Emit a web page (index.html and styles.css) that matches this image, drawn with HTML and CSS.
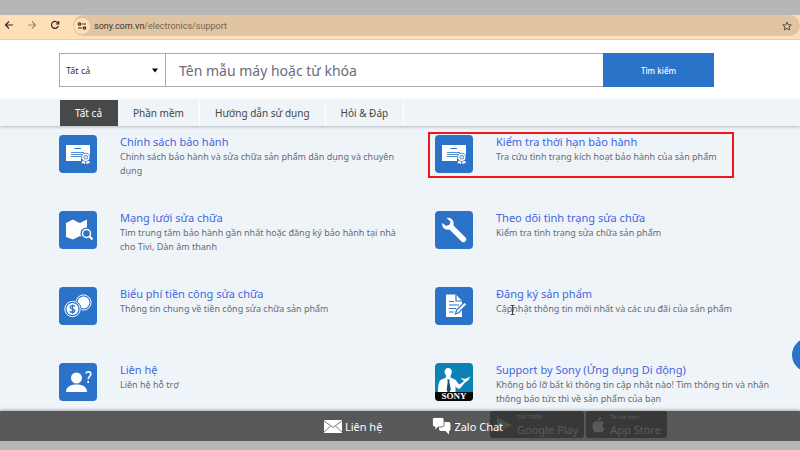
FILE: index.html
```html
<!DOCTYPE html>
<html lang="vi">
<head>
<meta charset="utf-8">
<meta name="viewport" content="width=device-width, initial-scale=1">
<title>Hỗ trợ</title>
<link rel="stylesheet" href="styles.css">
</head>
<body>
<div class="shell">
  <header class="browser">
    <button class="nav" aria-label="Back"><svg width="10" height="10" viewBox="0 0 10 10"><path d="M9 5H2M5 1.500L1.500 5L5 8.500"/></svg></button>
    <button class="nav off" aria-label="Forward"><svg width="10" height="10" viewBox="0 0 10 10"><path d="M1 5H8M5 1.500L8.500 5L5 8.500"/></svg></button>
    <button class="nav" aria-label="Reload"><svg width="10" height="10" viewBox="0 0 10 10"><path d="M8.300 6A3.500 3.500 0 1 1 7.700 2.600L8.500 3.500M8.700 1V4H5.700"/></svg></button>
    <div class="address">
      <button class="site" aria-label="Site information"><svg width="10" height="10" viewBox="0 0 10 10"><path d="M5 3H9M1 7H5"/><circle cx="2.500" cy="3" r="1.200"/><circle cx="7.500" cy="7" r="1.200"/></svg></button>
      <span class="url">sony.com.vn<span>/electronics/support</span></span>
      <button class="star" aria-label="Bookmark"><svg width="10" height="10" viewBox="0 0 10 10"><path d="M5 .9L6.200 3.700L9.300 4L7 6L7.700 9L5 7.400L2.300 9L3 6L.7 4L3.800 3.700Z"/></svg></button>
    </div>
  </header>

  <main class="page">
    <form class="search">
      <div class="pick">
        <select aria-label="Danh mục"><option>Tất cả</option></select>
        <svg width="8" height="5" viewBox="0 0 8 5" aria-hidden="true"><path d="M1 .5H7L4 4.500Z"/></svg>
      </div>
      <input type="text" aria-label="Tìm sản phẩm" placeholder="Tên mẫu máy hoặc từ khóa">
      <button type="button">Tìm kiếm</button>
    </form>

    <nav class="tabs">
      <a class="active" href="#all">Tất cả</a>
      <a href="#software">Phần mềm</a>
      <a href="#manuals">Hướng dẫn sử dụng</a>
      <a href="#faq">Hỏi &amp; Đáp</a>
    </nav>

    <section class="topics">
      <article class="topic">
        <svg class="icon" viewBox="0 0 38 38"><rect width="38" height="38" rx="4" fill="#2b73c8"/><path d="M7 10H31V26H7Z" fill="#fff"/><path d="M15.500 13.500H22" stroke="#2b73c8"/><path d="M12 17.500H25M12 19.500H23M12 21.500H22" stroke="#2b73c8" stroke-width=".8"/><path d="M22 24H31V29H22Z" fill="#2b73c8"/><path d="M24 24L22.500 28.500L24.500 28L25.500 29.500L26.800 26.500L28 29.500L29 28L31 28.500L29.500 24Z" fill="#fff"/><circle cx="26.700" cy="22.300" r="4.500" fill="#2b73c8"/><circle cx="26.700" cy="22.300" r="3" fill="#2b73c8" stroke="#fff" stroke-width="1.500"/><circle cx="26.700" cy="22.300" r="1.700" fill="#c9dcf2"/></svg>
        <div><h2><a href="#policy">Chính sách bảo hành</a></h2><p>Chính sách bảo hành và sửa chữa sản phẩm dân dụng và chuyên dụng</p></div>
      </article>
      <article class="topic marked">
        <svg class="icon" viewBox="0 0 38 38"><rect width="38" height="38" rx="4" fill="#2b73c8"/><path d="M7 10H31V26H7Z" fill="#fff"/><path d="M15.500 13.500H22" stroke="#2b73c8"/><path d="M12 17.500H25M12 19.500H23M12 21.500H22" stroke="#2b73c8" stroke-width=".8"/><path d="M22 24H31V29H22Z" fill="#2b73c8"/><path d="M24 24L22.500 28.500L24.500 28L25.500 29.500L26.800 26.500L28 29.500L29 28L31 28.500L29.500 24Z" fill="#fff"/><circle cx="26.700" cy="22.300" r="4.500" fill="#2b73c8"/><circle cx="26.700" cy="22.300" r="3" fill="#2b73c8" stroke="#fff" stroke-width="1.500"/><circle cx="26.700" cy="22.300" r="1.700" fill="#c9dcf2"/></svg>
        <div><h2><a href="#warranty">Kiểm tra thời hạn bảo hành</a></h2><p>Tra cứu tình trạng kích hoạt bảo hành của sản phẩm</p></div>
      </article>
      <article class="topic">
        <svg class="icon" viewBox="0 0 38 38"><rect width="38" height="38" rx="4" fill="#2b73c8"/><path d="M7 12L14 8.500Q18 11 21 12Q24 10 28 8.500V28L21 25L14 28.500L7 26Z" fill="#fff"/><circle cx="27.500" cy="22.500" r="6" fill="#2b73c8"/><path d="M30 25L33.500 28.500" stroke="#fff" stroke-width="2.200"/><circle cx="27.500" cy="22.500" r="4" fill="#2b73c8" stroke="#fff" stroke-width="1.500"/></svg>
        <div><h2><a href="#network">Mạng lưới sửa chữa</a></h2><p>Tìm trung tâm bảo hành gần nhất hoặc đăng ký bảo hành tại nhà cho Tivi, Dàn âm thanh</p></div>
      </article>
      <article class="topic">
        <svg class="icon" viewBox="0 0 38 38"><rect width="38" height="38" rx="4" fill="#2b73c8"/><path d="M11.500 7C16 6 19.500 9.500 18.500 14.500L30.500 26.500C33 29 29 33 26.500 30.500L14.500 18.500C10 19.500 6.500 16 7.300 12L11.200 15L14.800 13.500L15.500 10.500Z" fill="#fff"/></svg>
        <div><h2><a href="#status">Theo dõi tình trạng sửa chữa</a></h2><p>Kiểm tra tình trạng sửa chữa sản phẩm</p></div>
      </article>
      <article class="topic">
        <svg class="icon" viewBox="0 0 38 38"><rect width="38" height="38" rx="4" fill="#2b73c8"/><circle cx="24.500" cy="15.500" r="7.600" fill="none" stroke="#fff"/><circle cx="24.500" cy="15.500" r="6" fill="#fff"/><circle cx="13.500" cy="22" r="9" fill="#2b73c8"/><circle cx="13.500" cy="22" r="7.700" fill="none" stroke="#fff"/><circle cx="13.500" cy="22" r="6" fill="#fff"/><path d="M16 19.600Q15 18.700 13.500 18.700C10.500 18.700 10.500 21.400 13.500 22S16.700 25.300 13.500 25.300Q11.800 25.300 10.900 24.300M13.500 17.500V26.500" fill="none" stroke="#2b73c8" stroke-width="1.300"/></svg>
        <div><h2><a href="#fees">Biểu phí tiền công sửa chữa</a></h2><p>Thông tin chung về tiền công sửa chữa sản phẩm</p></div>
      </article>
      <article class="topic">
        <svg class="icon" viewBox="0 0 38 38"><rect width="38" height="38" rx="4" fill="#2b73c8"/><path d="M11 7.500H21L27 14V30H11Z" fill="#fff"/><path d="M21 7.500V14H27M14 14.500H19M14 18H24M14 21.500H21M14 25H19" fill="none" stroke="#2b73c8" stroke-width="1.200"/><path d="M20.500 27L21.500 23L29.500 15L32 17.500L24 25.500Z" fill="#fff" stroke="#2b73c8" stroke-width="1.200"/></svg>
        <div><h2><a href="#register">Đăng ký sản phẩm</a></h2><p>Cập<svg class="caret" width="5" height="10" viewBox="0 0 5 10" aria-hidden="true"><path d="M.5 .5H4.500M2.500 .5V9.500M.5 9.500H4.500"/></svg>nhật thông tin mới nhất và các ưu đãi của sản phẩm</p></div>
      </article>
      <article class="topic">
        <svg class="icon" viewBox="0 0 38 38"><rect width="38" height="38" rx="4" fill="#2b73c8"/><circle cx="17.500" cy="15" r="5.500" fill="#fff"/><path d="M7 29C7 24 11 21.500 17.500 21.500S28 24 28 29Z" fill="#fff"/><path d="M26.800 10.500C27.500 8 32 8.300 31.800 11.300C31.600 13.300 29.200 13.500 29.200 16.300M29.200 18V20" fill="none" stroke="#fff" stroke-width="1.600"/></svg>
        <div><h2><a href="#contact">Liên hệ</a></h2><p>Liên hệ hỗ trợ</p></div>
      </article>
      <article class="topic">
        <svg class="icon" viewBox="0 0 38 38"><rect width="38" height="38" rx="4" fill="#0b84b5"/><path d="M3 29C3 21 4 17.500 6.500 16.500L11 14.500V12.500C8.500 9 9.500 5 13.200 5S18 9 15.500 12.500V14.500L20 16.500C22 18 22.500 20.500 24.500 21.500L29 18L25.500 15L30 16L35.500 13.500L33 17.500L30 19.500L25 25.500C23 26.500 21.500 24.500 20.500 23V29Z" fill="#fff"/><path d="M12.300 16.500H14.700L14.300 19L15.800 26.500L14.500 29H12.500L11.700 26.500L12.700 19Z" fill="#164f78"/><path d="M0 29H38V34Q38 38 34 38H4Q0 38 0 34Z" fill="#080808"/><text x="19" y="36" text-anchor="middle" font-family="Liberation Serif, serif" font-size="9" font-weight="700" fill="#fff">SONY</text></svg>
        <div>
          <h2><a href="#app">Support by Sony (Ứng dụng Di động)</a></h2>
          <p>Không bỏ lỡ bất kì thông tin cập nhật nào! Tìm thông tin và nhận thông báo tức thì về sản phẩm của bạn</p>
          <div class="stores">
            <a href="#play"><svg width="16" height="18" viewBox="0 0 16 18"><path d="M1 1V17L8 9Z" fill="#47aee8"/><path d="M1 1L12 7L8 9Z" fill="#4bbf6b"/><path d="M1 17L12 11L8 9Z" fill="#ed5565"/><path d="M12 7L15.500 9L12 11L8 9Z" fill="#f6c445"/></svg><span><small>TẢI TRÊN</small><b>Google Play</b></span></a>
            <a href="#appstore"><svg width="13" height="16" viewBox="0 0 13 16"><path d="M9 0Q6 .5 6.300 3.700Q9 3.500 9 0M6.500 4.700C4 3.500 .5 4.500 .5 9C.5 13 3 16 4.500 15.500Q6.500 14.700 8.500 15.500C10 16 12 13.500 12.500 11.500C10 10.500 9.800 7.300 12 6C10.500 4 8.500 4 6.500 4.700" fill="#fff"/></svg><span><small>Tải về trên</small><b>App Store</b></span></a>
          </div>
        </div>
      </article>
    </section>
    <button class="help" aria-label="Trợ giúp"></button>
    <footer class="contact">
      <a href="#mail"><svg width="18" height="13" viewBox="0 0 18 13"><path d="M0 0H18V13H0Z" fill="#fff"/><path d="M0 .8L9 7.500L18 .8M0 12.200L6.500 6M18 12.200L11.500 6" fill="none" stroke="#565656" stroke-width=".8"/></svg>Liên hệ</a>
      <a href="#zalo"><svg width="19" height="18" viewBox="0 0 19 18"><path d="M7 5H16.500Q18.500 5 18.500 7V12Q18.500 14 17 14V17.500L13.500 14H9Q7 14 7 12Z" fill="#fff"/><path d="M2 .5H10Q12 .5 12 2.500V8Q12 10 10 10H6L3 13.500V10Q.5 10 .5 8V2.500Q.5 .5 2 .5Z" fill="#fff" stroke="#565656" stroke-width=".8"/></svg>Zalo Chat</a>
    </footer>
  </main>
</div>
</body>
</html>
```
FILE: styles.css
```css
* { box-sizing: border-box; }

body {
  margin: 0;
  background: #b6b6b6;
  color: #666b78;
  font-family: "Noto Sans", "Open Sans", sans-serif;
  font-size: 10px;
}

a { color: inherit; text-decoration: none; }
button, input, select { font-family: inherit; margin: 0; }
button { border: 0; padding: 0; background: none; }

.shell {
  height: 100vh;
  padding: 15px 0 9px;
  display: flex;
  flex-direction: column;
}

/* Browser toolbar */
.browser {
  display: flex;
  align-items: flex-start;
  gap: 13px;
  height: 25px;
  padding-left: 4px;
  background: #ffdfb8;
  border-bottom: 1px solid #e6cdb0;
}
.browser svg { display: block; fill: none; stroke: #332c25; stroke-width: 1.2; }
.nav { padding-top: 5px; }
.off { opacity: .45; }
.address {
  flex: 1;
  display: flex;
  align-items: center;
  height: 21px;
  padding: 0 8px 0 1px;
  border-radius: 11px;
  background: #e1c4a1;
}
.site {
  width: 16px;
  height: 16px;
  display: grid;
  place-items: center;
  border-radius: 50%;
  background: #ffdfb8;
}
.url { flex: 1; margin-left: 4px; font-family: Roboto, "Noto Sans", sans-serif; font-size: 9px; color: #3a332b; }
.url span { color: #75664f; }
.browser .star svg { stroke: #5a4e42; stroke-width: 1; }

/* Page */
.page {
  position: relative;
  flex: 1;
  min-height: 0;
  overflow: hidden;
  background: #eff4f9;
}

.search {
  display: flex;
  height: 60px;
  padding: 13px 86px 13px 59px;
  background: #fff;
}
.pick { position: relative; width: 107px; }
.pick select {
  width: 100%;
  height: 100%;
  padding: 0 6px;
  border: 1px solid #aaa;
  border-radius: 0;
  appearance: none;
  background: #fff;
  color: #333;
  font-size: 9px;
}
.pick svg { position: absolute; right: 7px; top: 15px; }
.search input {
  flex: 1;
  min-width: 0;
  padding: 0 13px;
  border: 1px solid #aaa;
  border-width: 1px 0;
  font-size: 14px;
}
.search input::placeholder { color: #6c6c7c; opacity: 1; }
.search button {
  width: 111px;
  background: #2b73c8;
  color: #fff;
  font-size: 8px;
  font-weight: 500;
}

.tabs {
  position: relative;
  display: flex;
  height: 26px;
  padding-left: 60px;
  background: #eff4f9;
  box-shadow: 0 1px 3px #b4b9c0;
}
.tabs a {
  display: flex;
  align-items: center;
  padding: 0 15px;
  border-right: 1px solid #fff;
  color: #444;
}
.tabs .active { background: #484848; color: #fff; border-color: #484848; }

.topics {
  display: grid;
  grid-template-columns: 1fr 1fr;
  gap: 32px 30px;
  padding: 8px 19px 0 59px;
}
.topic {
  position: relative;
  display: grid;
  grid-template-columns: 38px 1fr;
  gap: 23px;
  min-height: 44px;
}
.icon { width: 38px; height: 38px; margin-top: 1px; }
.topic h2 {
  margin: 0;
  color: #3f66e0;
  font-size: 11px;
  font-weight: 400;
  line-height: 15px;
}
.topic p { margin: 0; font-size: 9px; line-height: 14px; padding-top: 1px; }
.marked::after {
  content: "";
  position: absolute;
  inset: -2px 47px 0 -7px;
  border: 2px solid #f5141a;
}
.caret {
  position: absolute;
  margin: 3px 0 0 -2px;
  fill: none;
  stroke: #444;
}

.stores { display: flex; gap: 2px; margin: 5px 0 0 -6px; }
.stores a {
  display: flex;
  align-items: center;
  gap: 5px;
  height: 27px;
  padding: 0 6px;
  border-radius: 3px;
  background: #000;
  color: #fff;
  white-space: nowrap;
}
.stores small { display: block; font-size: 6px; line-height: 9px; }
.stores b { display: block; font-size: 11px; font-weight: 400; line-height: 15px; }

.help {
  position: absolute;
  right: -26px;
  top: 298px;
  width: 34px;
  height: 34px;
  border-radius: 50%;
  background: #2b73c8;
}

.contact {
  position: absolute;
  inset: auto 0 0;
  display: flex;
  justify-content: center;
  align-items: center;
  gap: 50px;
  height: 30px;
  padding-left: 27px;
  background: rgba(64, 64, 64, .87);
  box-shadow: 0 -1px 3px #a5a9ae;
  color: #fff;
  font-size: 11px;
}
.contact a { display: flex; align-items: center; gap: 3px; }
```
